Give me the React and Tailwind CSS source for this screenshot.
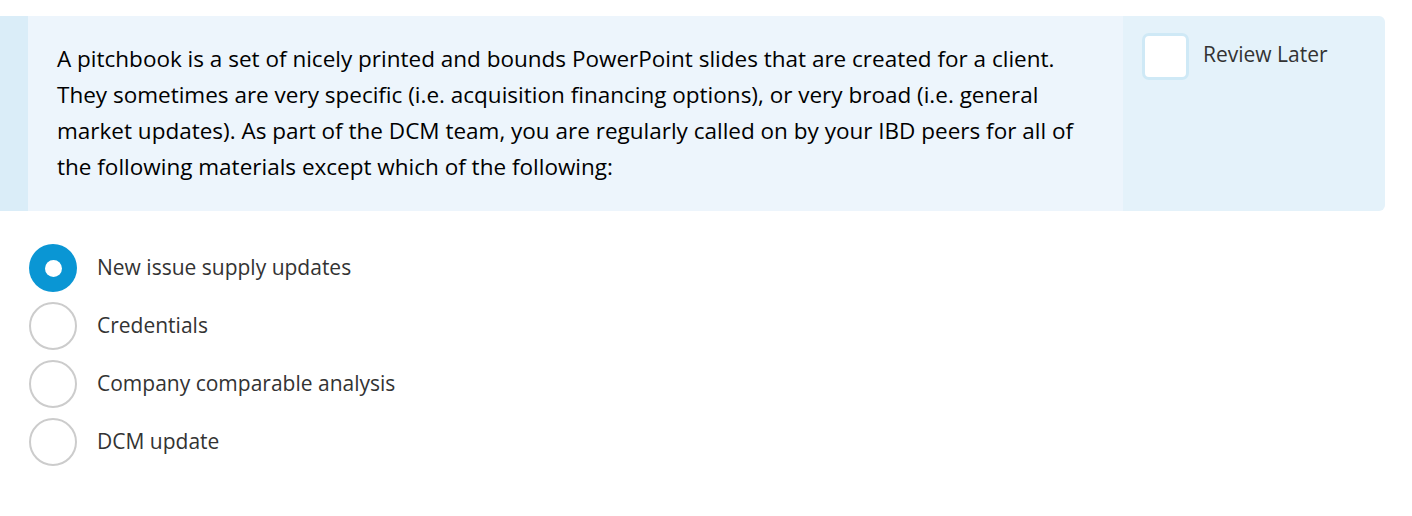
import { useState } from "react";

const options = [
  "New issue supply updates",
  "Credentials",
  "Company comparable analysis",
  "DCM update",
];

export default function App() {
  const [selected, setSelected] = useState(0);
  const [review, setReview] = useState(false);

  return (
    <div className="pt-4 bg-white min-h-[516px] font-['Open_Sans',sans-serif]">
      <div className="flex mr-[27px] h-[195px] rounded-r-md overflow-hidden">
        <div className="w-[28px] bg-[#daedf8]" />
        <div className="flex-1 bg-[#edf5fc] pl-[29px] pr-[29px] pt-[25px] text-[22.5px] leading-[36px] text-black">
          A pitchbook is a set of nicely printed and bounds PowerPoint slides that are created for a client.
          They sometimes are very specific (i.e. acquisition financing options), or very broad (i.e. general
          market updates). As part of the DCM team, you are regularly called on by your IBD peers for all of
          the following materials except which of the following:
        </div>
        <div className="w-[262px] bg-[#e4f2fa] pl-[19px] pt-[17px]">
          <div className="flex items-center gap-[14px]">
            <button
              onClick={() => setReview(!review)}
              className="w-[47px] h-[47px] bg-white border-[3px] border-[#cfe9f6] rounded-[7px]"
            />
            <span className="text-[21px] text-[#333] -mt-[3px]">Review Later</span>
          </div>
        </div>
      </div>

      <div className="mt-[33px] flex flex-col gap-[10px] pl-[29px]">
        {options.map((opt, i) => (
          <div key={i} className="flex items-center gap-[20px] cursor-pointer" onClick={() => setSelected(i)}>
            {selected === i ? (
              <div className="w-[48px] h-[48px] rounded-full bg-[#0a96d4] flex items-center justify-center">
                <div className="w-[17px] h-[17px] rounded-full bg-white" />
              </div>
            ) : (
              <div className="w-[48px] h-[48px] rounded-full border-2 border-[#cccccc] bg-white" />
            )}
            <span className="text-[21px] text-[#333]">{opt}</span>
          </div>
        ))}
      </div>
    </div>
  );
}
